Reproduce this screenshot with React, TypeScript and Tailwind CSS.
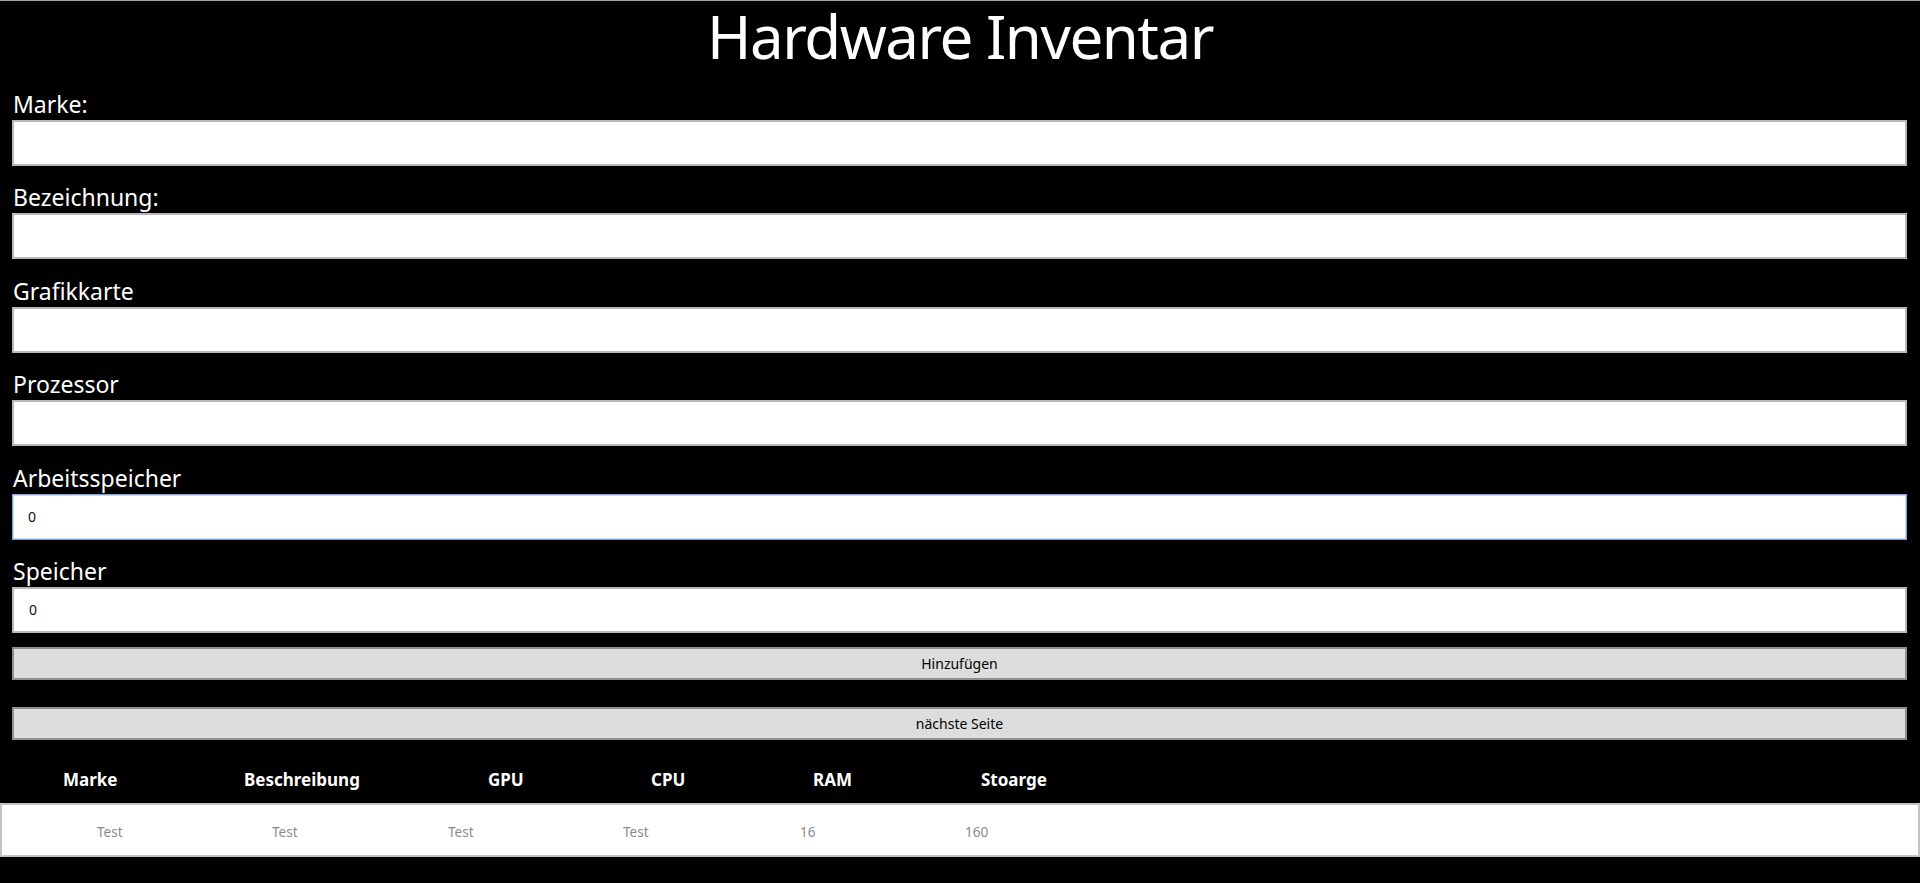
import React from "react";

const font = { fontFamily: '"Noto Sans", "Liberation Sans", sans-serif' };

type Field = { label: string; value: string; focused?: boolean };

const fields: Field[] = [
  { label: "Marke:", value: "" },
  { label: "Bezeichnung:", value: "" },
  { label: "Grafikkarte", value: "" },
  { label: "Prozessor", value: "" },
  { label: "Arbeitsspeicher", value: "0", focused: true },
  { label: "Speicher", value: "0" },
];

const headers = ["Marke", "Beschreibung", "GPU", "CPU", "RAM", "Stoarge"];
const row = ["Test", "Test", "Test", "Test", "16", "160"];

export default function App() {
  return (
    <div
      className="w-[1920px] h-[883px] bg-black overflow-hidden border-t border-[#a0a0a0] font-['Noto_Sans',sans-serif]"
      style={font}
    >
      <div className="h-[88px]">
        <h1 className="text-center text-white text-[60px] leading-[70px] tracking-[-1.5px] font-normal">
          Hardware Inventar
        </h1>
      </div>

      <div className="ml-[12px] mr-[13px]">
        {fields.map((f, i) => (
          <div key={f.label} className={i < fields.length - 1 ? "mb-[16.4px]" : ""}>
            <div className="text-white text-[23px] leading-[31px] pl-[1px]">{f.label}</div>
            <div
              className={
                "h-[46px] bg-white flex items-center pl-[15px] text-[14px] text-[#111] " +
                (f.focused
                  ? "border border-[#7ea6db] outline outline-1 outline-[#c9d9ee] -outline-offset-2"
                  : "border-2 border-[#b8b8b8]")
              }
            >
              {f.value}
            </div>
          </div>
        ))}

        <button
          className="mt-[14px] w-full h-[33px] bg-[#dddddd] border-2 border-[#8f8f8f] text-[14px] text-black flex items-center justify-center"
          style={font}
        >
          Hinzufügen
        </button>
        <button
          className="mt-[27px] w-full h-[33px] bg-[#dddddd] border-2 border-[#8f8f8f] text-[14px] text-black flex items-center justify-center"
          style={font}
        >
          nächste Seite
        </button>
      </div>

      <div className="h-[63px] flex items-end pb-[13px] pl-[63px]">
        <div className="grid grid-cols-[181px_244px_163px_162px_168px_auto] text-white font-bold text-[17px] leading-[20px]">
          {headers.map((h) => (
            <div key={h}>{h}</div>
          ))}
        </div>
      </div>

      <div className="h-[54px] bg-white border-2 border-[#c4c4c4] flex items-center pt-[4px] pl-[95px]">
        <div className="grid grid-cols-[175px_176px_175px_177px_165px_auto] text-[13.5px] text-[#8a8a8a]">
          {row.map((c, i) => (
            <div key={i}>{c}</div>
          ))}
        </div>
      </div>
    </div>
  );
}
